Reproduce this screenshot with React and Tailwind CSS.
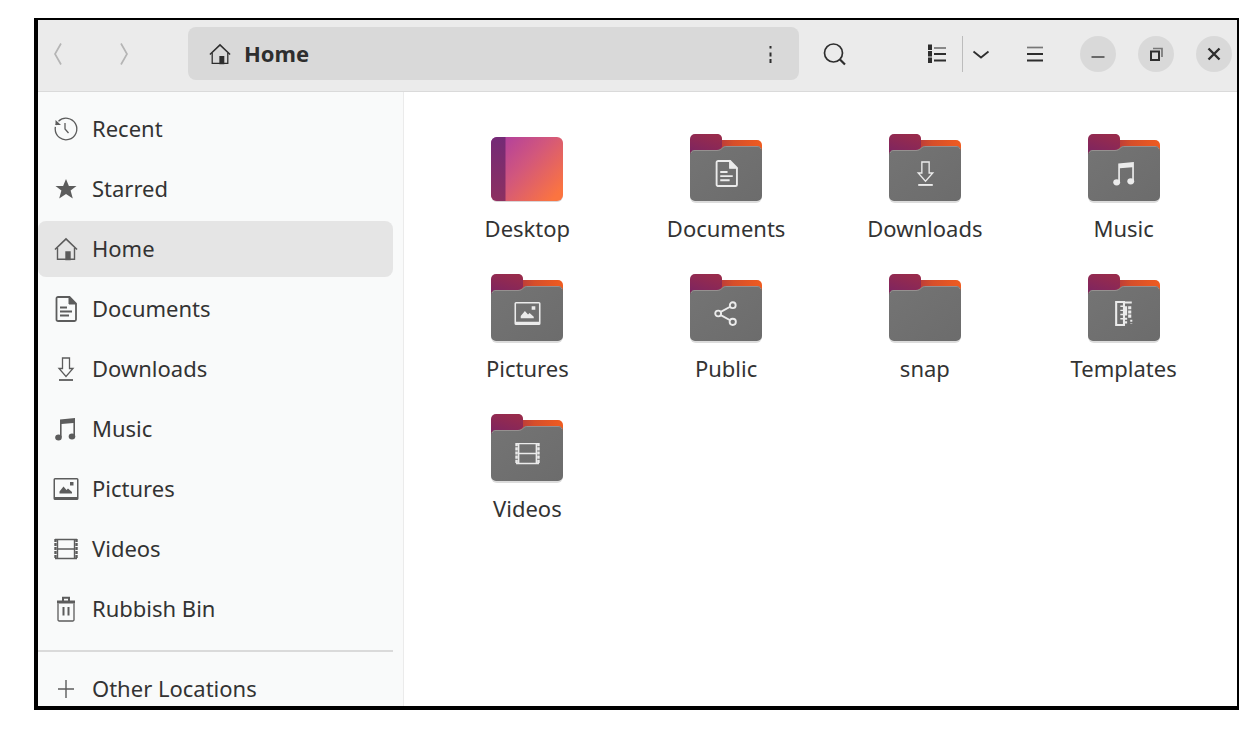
import React, { useState } from 'react';

const glyphs = {
	recent: (
		<g fill="none" stroke="currentColor" strokeWidth="1.3">
			<path d="M4.5 4.2A10.8 10.8 0 1 1 1.2 12" />
			<path d="M1.2 12c0-2 .4-3.4 1.2-5" strokeDasharray="2 2" />
			<path d="M11 6v6l3.500 4" />
			<path d="M1.5 3v5H7z" fill="currentColor" stroke="none" />
		</g>
	),
	star: (
		<path
			fill="currentColor"
			d="M12 2l2.900 7h7.600l-5.900 4.600 2.200 7.900L12 17l-6.800 4.500 2.200-7.900L1.500 9h7.600z"
		/>
	),
	home: (
		<g fill="none" stroke="currentColor" strokeWidth="1.4">
			<path d="M1 12.500 12 2l11 10.500" strokeWidth="1.7" />
			<path d="M3.500 11v11.300h17V11" />
			<path d="M12 15h4v7.500h-4z" fill="currentColor" />
		</g>
	),
	document: (
		<g fill="none" stroke="currentColor" strokeWidth="1.8">
			<path d="M4 0h11.500L22 6.500V22.500a1.500 1.500 0 0 1-1.500 1.500h-16A1.500 1.500 0 0 1 2.500 22.500v-21A1.500 1.500 0 0 1 4 0z" />
			<path d="M15 0v7h7z" fill="currentColor" strokeWidth="1" />
			<path d="M6 10.500h7M6 14.500h12M6 18.500h9" />
		</g>
	),
	download: (
		<g fill="none" stroke="currentColor" strokeWidth="1.3">
			<path d="M8.500 1h7v10.500H19L12 19.500 5 11.500h3.500z" />
			<path d="M5 23h14" strokeWidth="1.8" />
		</g>
	),
	music: (
		<g fill="currentColor">
			<path d="M6 2.500 21 1v18h-1.600V6L7.600 7v13H6z" />
			<ellipse cx="4.500" cy="20.500" rx="3.300" ry="3" />
			<ellipse cx="18" cy="19.500" rx="3.300" ry="3" />
		</g>
	),
	picture: (
		<g fill="currentColor">
			<path
				fillRule="evenodd"
				d="M1 1h22a1.500 1.500 0 0 1 1.500 1.500v19A1.500 1.500 0 0 1 23 23H1a1.500 1.500 0 0 1-1.500-1.500v-19A1.500 1.500 0 0 1 1 1zm0 1.500V20h22V2.500z"
			/>
			<path d="M5.500 16.500v-2l4-5 3 3.500 1.500-1.500 4 3.500v1.500zM16 5h3.500v3.500H16z" />
		</g>
	),
	video: (
		<g fill="none" stroke="currentColor" strokeWidth="1.4">
			<path d="M1 2.500h22M3.500 12h17M1 21.500h22M3.500 2.500v19M20.500 2.500v19" />
			<path d="M1.500 2v20M22.500 2v20" strokeWidth="2.400" strokeDasharray="3 1" />
		</g>
	),
	trash: (
		<g fill="none" stroke="currentColor" strokeWidth="1.3">
			<path d="M4 6.500v16A1.300 1.300 0 0 0 5.300 24h13.400a1.300 1.300 0 0 0 1.300-1.300V6.500" />
			<path d="M3 5h18" strokeWidth="3" />
			<path d="M9 4V.8h6V4M9.500 10v8.500M14.500 10v8.500" strokeWidth="2" />
		</g>
	),
	plus: <path d="M12 3v18M4 12h16" fill="none" stroke="currentColor" strokeWidth="1.4" />,
	share: (
		<g fill="none" stroke="currentColor" strokeWidth="1.8">
			<circle cx="4" cy="12" r="2.800" />
			<circle cx="18" cy="4" r="2.800" />
			<circle cx="18" cy="20" r="3" />
			<path d="M6.500 10.500l9-5M6.500 13.500l9 5" />
		</g>
	),
	template: (
		<g fill="none" stroke="currentColor" strokeWidth="2">
			<path d="M4 1h7.500v22H4z" />
			<path d="M8 5h3M8 9h3M8 13h3M8 17h3" strokeWidth="1.4" />
			<path d="M12 1.500h7M13.500 5v9" />
			<path d="M17 5v12" strokeWidth="3" strokeDasharray="3 1" />
			<path d="M13.500 16v6M18.500 18v4" strokeDasharray="2 1.5" />
		</g>
	),
};

const places = [
	{ name: 'Recent', icon: 'recent' },
	{ name: 'Starred', icon: 'star' },
	{ name: 'Home', icon: 'home' },
	{ name: 'Documents', icon: 'document' },
	{ name: 'Downloads', icon: 'download' },
	{ name: 'Music', icon: 'music' },
	{ name: 'Pictures', icon: 'picture' },
	{ name: 'Videos', icon: 'video' },
	{ name: 'Rubbish Bin', icon: 'trash' },
];

const folders = [
	{ name: 'Desktop', desktop: true },
	{ name: 'Documents', icon: 'document' },
	{ name: 'Downloads', icon: 'download' },
	{ name: 'Music', icon: 'music' },
	{ name: 'Pictures', icon: 'picture' },
	{ name: 'Public', icon: 'share' },
	{ name: 'snap' },
	{ name: 'Templates', icon: 'template' },
	{ name: 'Videos', icon: 'video' },
];

const Glyph = ({ name, className }) => (
	<svg viewBox="0 0 24 24" overflow="visible" className={className} aria-hidden="true">
		{glyphs[name]}
	</svg>
);

// gradients shared by all the folder drawings
const Gradients = () => (
	<svg className="absolute h-0 w-0" aria-hidden="true">
		<defs>
			<linearGradient id="back" x1="0" y1="0" x2="1" y2="0">
				<stop offset="0" stopColor="#7f2457" />
				<stop offset="0.4" stopColor="#b83a3c" />
				<stop offset="0.6" stopColor="#d64e2a" />
				<stop offset="1" stopColor="#f05c20" />
			</linearGradient>
			<linearGradient id="tab" x1="0" y1="1" x2="0.6" y2="0">
				<stop offset="0" stopColor="#7e2560" />
				<stop offset="1" stopColor="#982b4c" />
			</linearGradient>
			<linearGradient id="front" x1="0" y1="0" x2="1" y2="1">
				<stop offset="0" stopColor="#747474" />
				<stop offset="1" stopColor="#6c6c6c" />
			</linearGradient>
			<linearGradient id="desk" x1="0" y1="0" x2="1" y2="0.8">
				<stop offset="0" stopColor="#aa3aa6" />
				<stop offset="0.5" stopColor="#d2577c" />
				<stop offset="1" stopColor="#fb7440" />
			</linearGradient>
			<linearGradient id="dock" x1="0" y1="0" x2="0" y2="1">
				<stop offset="0" stopColor="#742a76" />
				<stop offset="1" stopColor="#8c3061" />
			</linearGradient>
		</defs>
	</svg>
);

const DesktopIcon = () => (
	<svg viewBox="0 0 74 70" className="h-[70px] w-[74px]" aria-hidden="true">
		<rect x="1" y="4" width="72" height="64" rx="6" fill="#d9d5d7" />
		<rect x="1" y="3" width="72" height="64" rx="6" fill="url(#desk)" />
		<path d="M7 3h8.500v64H7a6 6 0 0 1-6-6V9a6 6 0 0 1 6-6z" fill="url(#dock)" />
	</svg>
);

const FolderIcon = ({ icon }) => (
	<svg viewBox="0 0 74 70" className="h-[70px] w-[74px]" aria-hidden="true">
		<rect x="1" y="12" width="72" height="57" rx="6" fill="#dcdcdc" />
		<path d="M1 6h67a5 5 0 0 1 5 5v30H1z" fill="url(#back)" />
		<path d="M6 0h22c3 0 5 1.500 5 5v8l-4 4H1V5a5 5 0 0 1 5-5z" fill="url(#tab)" />
		<path
			d="M6 16h22c3 0 4-1.200 5.500-2.500S36 12 38 12h30a5 5 0 0 1 5 5v45a5 5 0 0 1-5 5H6a5 5 0 0 1-5-5V21a5 5 0 0 1 5-5z"
			fill="url(#front)"
		/>
		<path
			d="M2 19c1-2 2-2.500 4-2.500h22c3 0 4-1.200 5.500-2.500S36 12.500 38 12.500h30c2 0 3.500 1 4 2.500"
			fill="none"
			stroke="#969090"
			strokeWidth="1"
		/>
		{icon && (
			<svg x="25" y="27" width="25" height="25" viewBox="0 0 24 24" color="#ebebeb" overflow="visible">
				{glyphs[icon]}
			</svg>
		)}
	</svg>
);

const HeaderButton = ({ label, className = '', children }) => (
	<button
		type="button"
		aria-label={label}
		className={`flex h-9 w-9 shrink-0 items-center justify-center rounded-full ${className}`}
	>
		<svg
			viewBox="0 0 24 24"
			className="h-6 w-6"
			fill="none"
			stroke="currentColor"
			strokeWidth="1.7"
			aria-hidden="true"
		>
			{children}
		</svg>
	</button>
);

const Header = () => (
	<header className="flex h-[72px] shrink-0 items-center border-b border-[#dadada] bg-[#ebebeb] pr-[5px] pb-1 pl-[2px] text-[#2e2e2e]">
		<HeaderButton label="Back" className="text-[#b5b5b5]">
			<path d="M15 1.500 9 12l6 10.500" />
		</HeaderButton>
		<HeaderButton label="Forward" className="ml-[30px] text-[#b5b5b5]">
			<path d="M9 1.500 15 12 9 22.500" />
		</HeaderButton>
		<div className="ml-[46px] flex h-[53px] min-w-0 flex-1 items-center rounded-lg bg-[#d9d9d9] pr-[10px] pl-5">
			<Glyph name="home" className="h-[22px] w-6" />
			<h1 className="ml-3 flex-1 pb-[2px] text-[22px] leading-[30px] font-bold">Home</h1>
			<HeaderButton label="Folder menu">
				<path d="M11.500 4v2.500M11.500 10.500v4M11.500 17v4" strokeWidth="2" />
			</HeaderButton>
		</div>
		<HeaderButton label="Search" className="ml-[18px]">
			<circle cx="10.500" cy="11" r="9" />
			<path d="m17 17.500 5 5" strokeWidth="2.2" />
		</HeaderButton>
		<HeaderButton label="List view" className="ml-[67px]">
			<path d="M4 2.500v19" strokeWidth="4" strokeDasharray="5.500 1" />
			<path d="M8 6h12" stroke="#777" />
			<path d="M8 12h12M8 18.500h12" strokeWidth="2" />
		</HeaderButton>
		<div className="ml-[6px] h-9 w-px bg-[#bcbcbc]" />
		<HeaderButton label="View options">
			<path d="m4.500 9.500 7.500 6 7.500-6" strokeWidth="1.8" />
		</HeaderButton>
		<HeaderButton label="Main menu" className="ml-[18px]">
			<path d="M4 5.500h16" stroke="#777" />
			<path d="M4 12h16M4 18.500h16" strokeWidth="2" />
		</HeaderButton>
		<HeaderButton label="Minimise" className="ml-[27px] bg-[#d9d9d9]">
			<path d="M5.500 15h13" stroke="#555" />
		</HeaderButton>
		<HeaderButton label="Restore" className="ml-[22px] bg-[#d9d9d9]">
			<path d="M7 9.500h8V18H7z" strokeWidth="2" />
			<path d="M9 6.500h9V15" stroke="#777" />
		</HeaderButton>
		<HeaderButton label="Close" className="ml-[22px] bg-[#d9d9d9]">
			<path d="m6.500 6.500 11 11m0-11-11 11" strokeWidth="2.4" />
		</HeaderButton>
	</header>
);

const Place = ({ name, icon, active, onClick }) => (
	<a
		href="#"
		onClick={onClick}
		aria-current={active ? 'page' : undefined}
		className={`flex h-14 shrink-0 items-center rounded-lg pl-4 ${active ? 'bg-[#e5e5e5]' : ''}`}
	>
		<Glyph name={icon} className="h-6 w-6 text-[#5c5c5c]" />
		<span className="ml-[14px] pb-[2px]">{name}</span>
	</a>
);

const App = () => {
	const [current, setCurrent] = useState('Home');

	return (
		<div className="h-screen bg-white pt-[18px] pr-[11px] pb-[26px] pl-[34px] font-['Noto_Sans',sans-serif] text-[22px] leading-[30px] text-[#333]">
			<Gradients />
			<div className="flex h-full flex-col overflow-hidden border-t-2 border-r-2 border-b-4 border-l-4 border-black">
				<Header />
				<div className="flex min-h-0 flex-1">
					<nav className="flex w-[366px] shrink-0 flex-col overflow-hidden border-r border-[#ebebeb] bg-[#f9fafa] pt-[9px] pr-[10px]">
						<div className="flex flex-col gap-1">
							{places.map((place) => (
								<Place
									key={place.name}
									{...place}
									active={current === place.name}
									onClick={() => setCurrent(place.name)}
								/>
							))}
						</div>
						<hr className="mt-[13px] mb-[9px] border-t-2 border-[#dadada]" />
						<Place name="Other Locations" icon="plus" />
					</nav>
					<main className="flex-1 overflow-hidden bg-white pt-[42px] pr-[14px] pl-6">
						<div className="grid grid-cols-4 gap-y-[31px]">
							{folders.map((folder) => (
								<button key={folder.name} type="button" className="flex flex-col items-center">
									{folder.desktop ? <DesktopIcon /> : <FolderIcon icon={folder.icon} />}
									<span className="mt-[9px]">{folder.name}</span>
								</button>
							))}
						</div>
					</main>
				</div>
			</div>
		</div>
	);
};

export default App;
